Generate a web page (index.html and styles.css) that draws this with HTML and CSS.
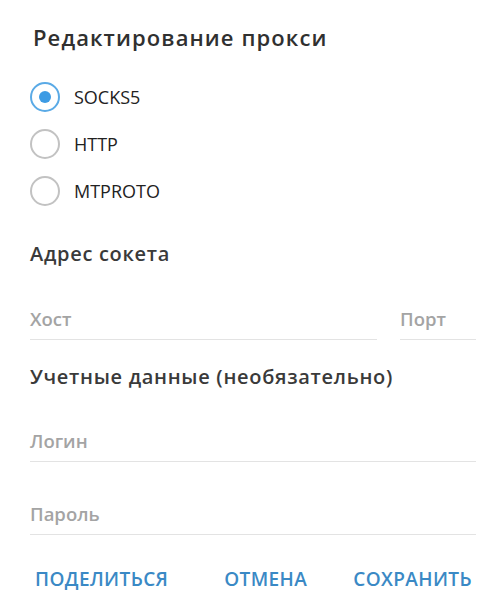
FILE: index.html
```html
<!DOCTYPE html>
<html lang="ru">
<head>
<meta charset="utf-8">
<title>Редактирование прокси</title>
<link rel="stylesheet" href="styles.css">
</head>
<body>
<div class="dialog">
  <h1 class="title">Редактирование прокси</h1>
  <div class="radios">
    <label class="radio radio--on"><span class="ring"><span class="dot"></span></span><span class="radio-label">SOCKS5</span></label>
    <label class="radio"><span class="ring"></span><span class="radio-label">HTTP</span></label>
    <label class="radio"><span class="ring"></span><span class="radio-label">MTPROTO</span></label>
  </div>
  <h2 class="section section--socket">Адрес сокета</h2>
  <div class="field-row">
    <div class="field field--host"><span class="placeholder">Хост</span></div>
    <div class="field field--port"><span class="placeholder">Порт</span></div>
  </div>
  <h2 class="section section--creds">Учетные данные (необязательно)</h2>
  <div class="field field--login"><span class="placeholder">Логин</span></div>
  <div class="field field--pass"><span class="placeholder">Пароль</span></div>
  <div class="buttons">
    <span class="btn">ПОДЕЛИТЬСЯ</span>
    <div class="btn-group">
      <span class="btn">ОТМЕНА</span>
      <span class="btn">СОХРАНИТЬ</span>
    </div>
  </div>
</div>
</body>
</html>
```
FILE: styles.css
```css
html, body {
  margin: 0;
  padding: 0;
  background: #ffffff;
}
body {
  font-family: "Open Sans", "Noto Sans", sans-serif;
  color: #303030;
}
.dialog {
  width: 446px;
  padding: 0 24px 0 30px;
}
.title {
  margin: 22px 0 0 3px;
  font-size: 22px;
  line-height: 30px;
  font-weight: 600;
  letter-spacing: 1.1px;
  color: #303030;
}
.radios {
  margin-top: 21px;
  display: flex;
  flex-direction: column;
}
.radio {
  height: 47px;
  display: flex;
  align-items: center;
}
.ring {
  box-sizing: border-box;
  width: 30px;
  height: 30px;
  border: 2.5px solid #c2c2c2;
  border-radius: 50%;
  display: flex;
  align-items: center;
  justify-content: center;
}
.radio--on .ring {
  border-color: #5aaae6;
}
.dot {
  width: 12px;
  height: 12px;
  border-radius: 50%;
  background: #3d9be4;
}
.radio-label {
  margin-left: 14px;
  font-size: 18px;
  line-height: 26px;
  color: #222222;
}
.section {
  margin: 0;
  font-size: 20px;
  line-height: 28px;
  font-weight: 600;
  letter-spacing: 0.7px;
  color: #3a3a3a;
}
.section--socket {
  margin-top: 26px;
}
.section--creds {
  margin-top: 23px;
}
.field-row {
  margin-top: 38px;
  display: flex;
  gap: 23px;
}
.field {
  padding-bottom: 7px;
  border-bottom: 1px solid #e3e3e3;
  font-size: 18.5px;
  line-height: 26px;
}
.field--host {
  flex: 1;
}
.field--port {
  width: 76px;
}
.field--login {
  margin-top: 37px;
}
.field--pass {
  margin-top: 39px;
}
.placeholder {
  color: #a4a4a4;
  font-weight: 600;
}
.buttons {
  margin-top: 31px;
  padding: 0 4px 0 5px;
  display: flex;
  justify-content: space-between;
}
.btn-group {
  display: flex;
  gap: 46px;
}
.btn {
  font-size: 19px;
  line-height: 26px;
  font-weight: 600;
  letter-spacing: 0.4px;
  color: #3a89c5;
}
```
